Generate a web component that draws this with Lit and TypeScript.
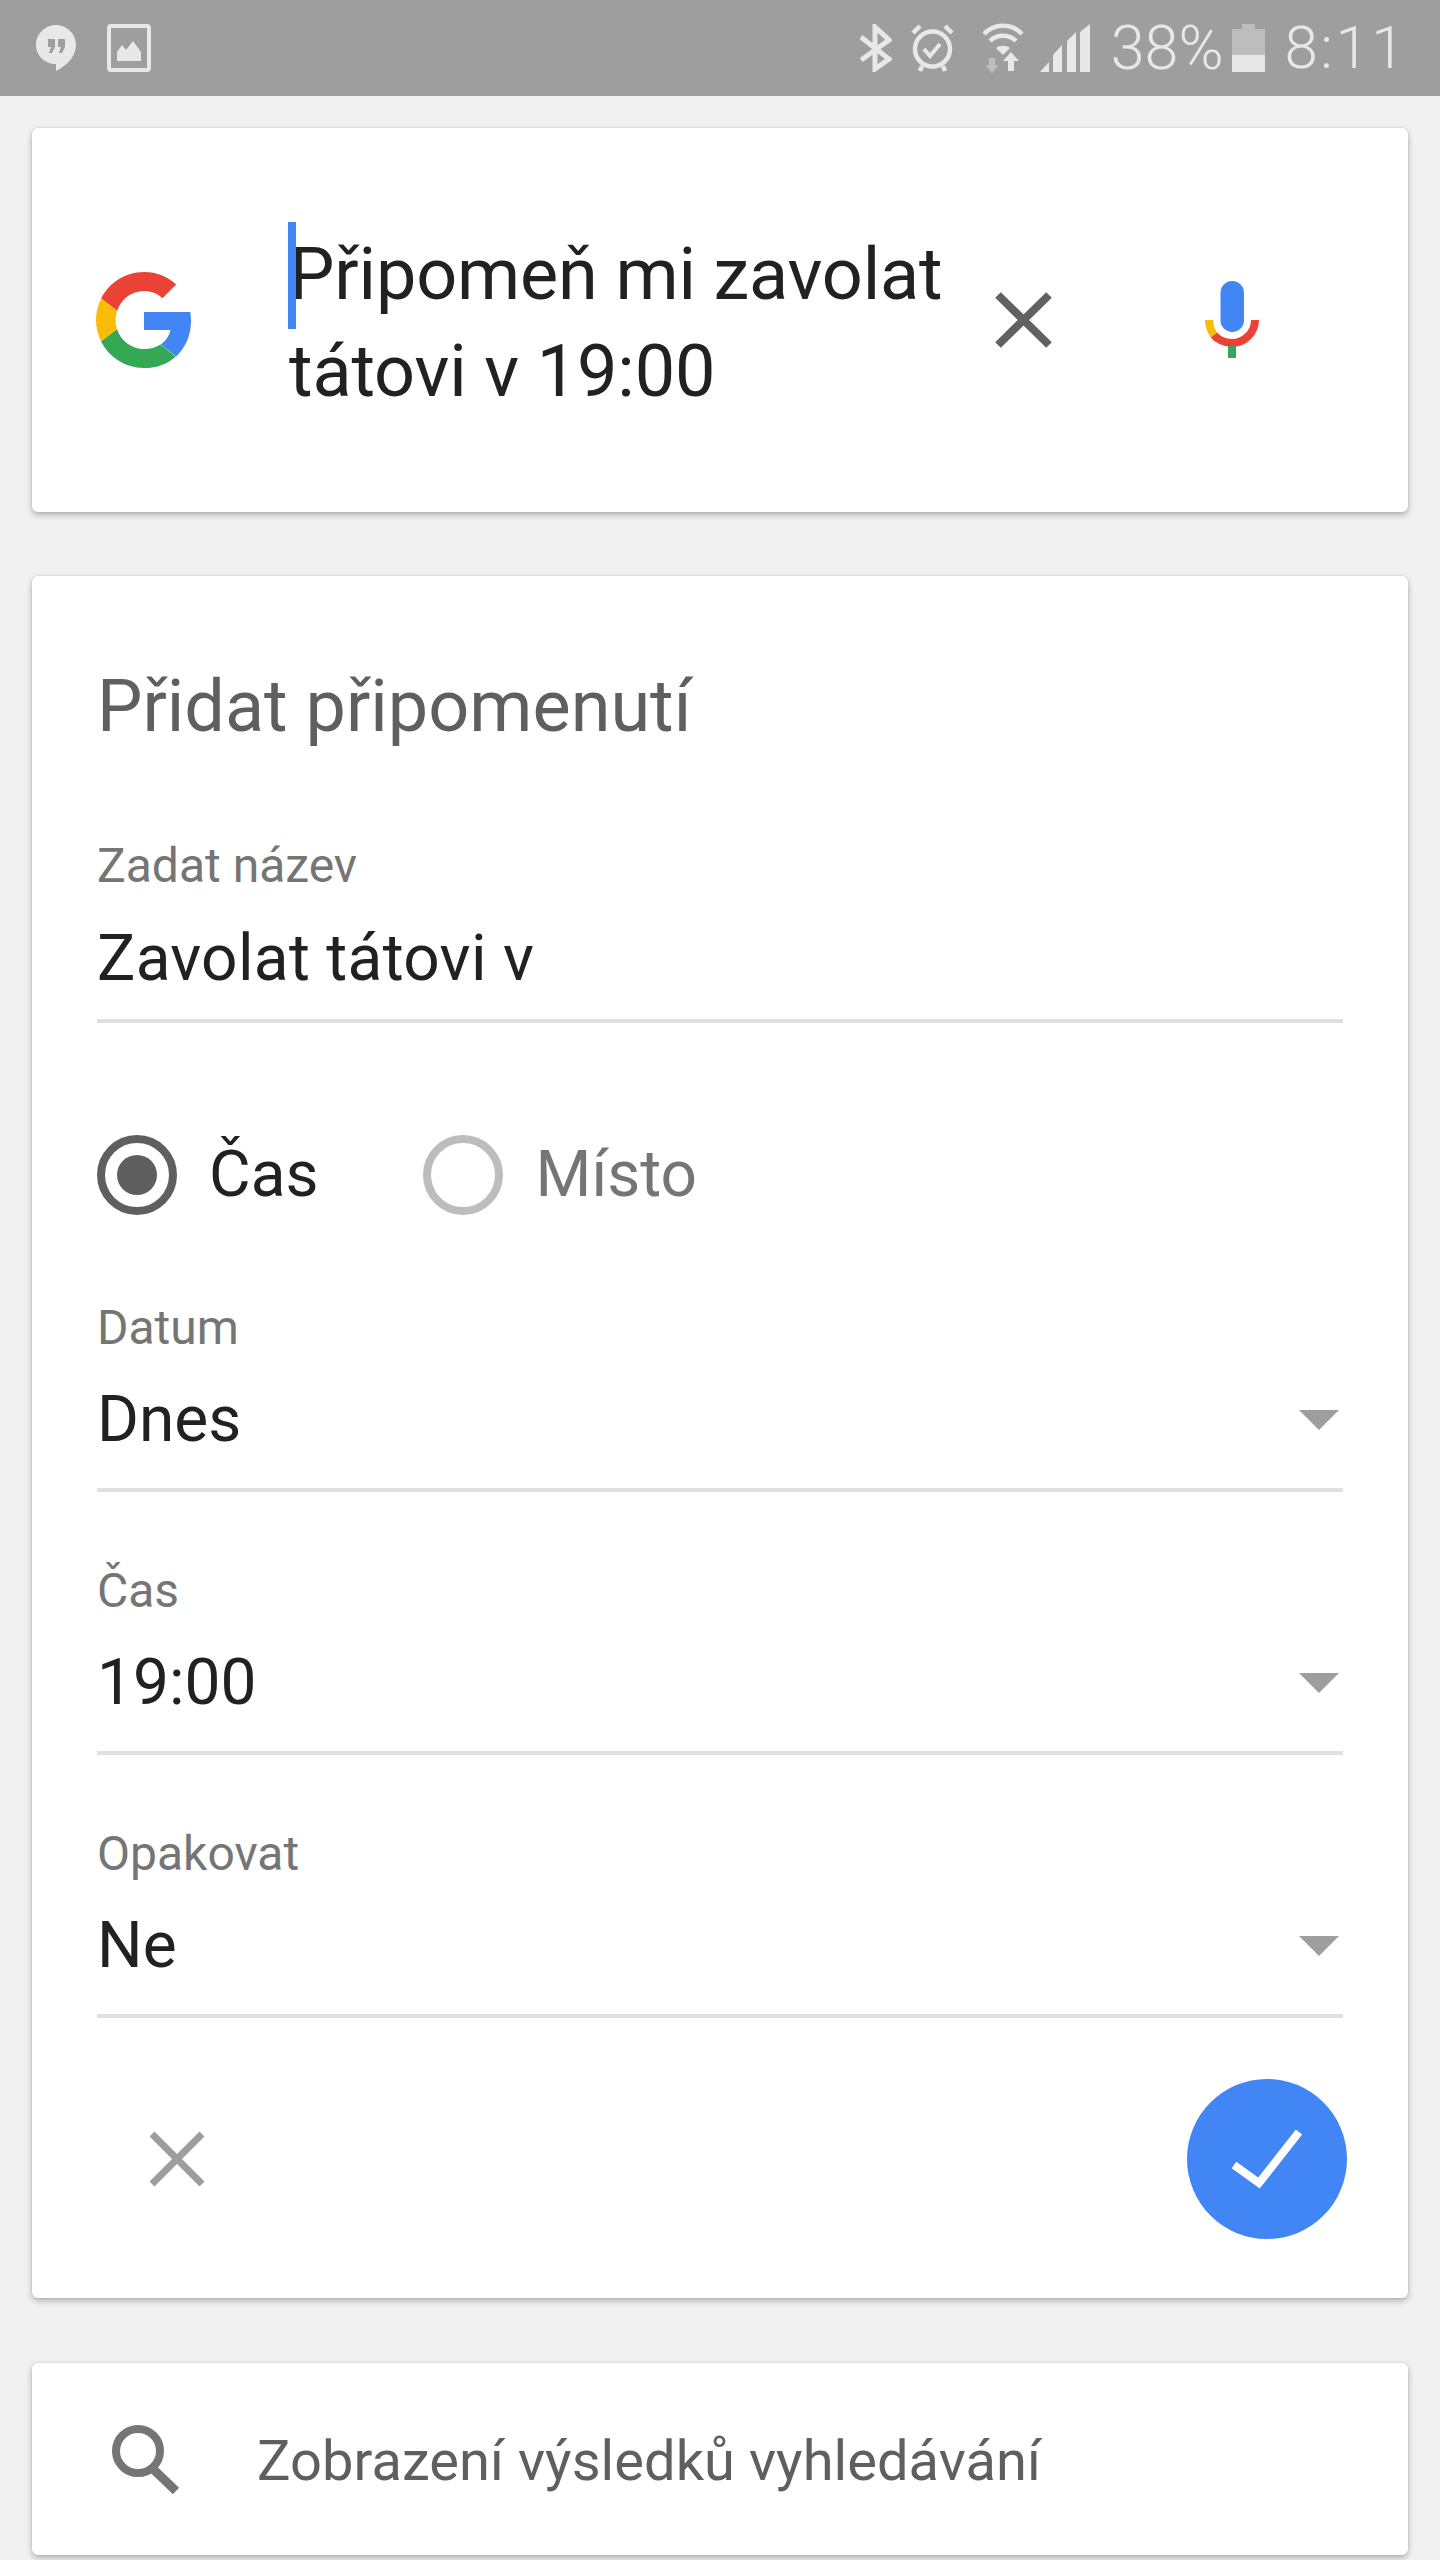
import { LitElement, html, css } from "lit";
import { customElement } from "lit/decorators.js";

const chevron = html`<svg class="arrow" viewBox="0 0 40 20"><path d="M0 0H40L20 20Z" fill="#9e9e9e"/></svg>`;

@customElement("app-root")
export class AppRoot extends LitElement {
  static styles = css`
    :host { display: block; width: 1440px; height: 2560px; overflow: hidden; background: #f1f1f1; font-family: Roboto, "Noto Sans", sans-serif; color: #212121; }
    * { box-sizing: border-box; }
    svg { display: block; flex: none; }
    .status { height: 96px; background: #9e9e9e; display: flex; align-items: flex-start; padding: 24px 33px 0 36px; color: #e8e8e8; }
    .status .spacer { flex: 1; }
    .status .txt { font-size: 61px; line-height: 48px; font-weight: 300; height: 48px; display: block; }
    .status .clock { letter-spacing: 2.5px; font-size: 60px; }
    .hang { margin-right: 31px; }
    .bt { margin-right: 19px; }
    .alarm { margin-right: 28px; }
    .wifi { margin-right: 16px; }
    .sig { margin-right: 21px; }
    .pct { margin-right: 8px; }
    .batt { margin-right: 20px; }
    .cards { display: flex; flex-direction: column; gap: 64px; padding: 32px 32px 0; }
    .card { background: #fff; border-radius: 6px; box-shadow: 0 3px 6px rgba(0,0,0,.26), 0 0 3px rgba(0,0,0,.1); }
    .search { height: 384px; display: flex; align-items: center; padding-left: 64px; }
    .g { margin-right: 97px; }
    .query { width: 690px; font-size: 72px; line-height: 97px; letter-spacing: -0.15px; position: relative; color: #212121; white-space: nowrap; margin-top: 6px; }
    .caret { position: absolute; left: -1px; top: -4px; width: 8px; height: 107px; background: #4285f4; }
    .clear { margin-left: 16px; }
    .mic { margin-left: 153px; }
    .form { height: 1722px; padding: 83px 65px 0 65px; display: flex; flex-direction: column; }
    .title { font-size: 72px; line-height: 96px; color: #5f5f5f; height: 96px; }
    .field { border-bottom: 4px solid #e0e0e0; }
    .lab { font-size: 48px; line-height: 64px; color: #757575; height: 64px; }
    .val { font-size: 64px; line-height: 80px; color: #212121; height: 80px; margin-top: 20px; display: flex; justify-content: space-between; align-items: center; padding-right: 4px; }
    .f1 { margin-top: 79px; padding-bottom: 20px; }
    .f1 .val { margin-top: 21px; letter-spacing: 0.3px; }
    .f2 { margin-top: 81px; padding-bottom: 28px; }
    .f3, .f4 { margin-top: 67px; padding-bottom: 28px; }
    .arrow { width: 40px; height: 20px; }
    .radios { display: flex; align-items: center; height: 80px; margin-top: 112px; font-size: 64px; }
    .radio { width: 80px; height: 80px; border-radius: 50%; border: 8px solid #5f5f5f; display: flex; align-items: center; justify-content: center; flex: none; }
    .radio i { width: 40px; height: 40px; border-radius: 50%; background: #5f5f5f; display: block; }
    .radio.off { border-color: #bdbdbd; margin-left: 104px; }
    .rl { margin-left: 32px; line-height: 80px; }
    .rl.off { color: #757575; margin-left: 33px; }
    .actions { display: flex; justify-content: space-between; align-items: center; margin-top: 61px; margin-right: -4px; height: 160px; padding-left: 52px; }
    .fab { width: 160px; height: 160px; border-radius: 50%; background: #4285f4; display: flex; align-items: center; justify-content: center; }
    .results { height: 192px; margin-top: 1px; display: flex; align-items: center; padding-left: 80px; font-size: 56px; color: #5f5f5f; }
    .results svg { margin-right: 77px; }
    .results span { padding-top: 4px; letter-spacing: 0.05px; }
  `;

  render() {
    return html`
      <div class="status">
        <svg class="hang" width="40" height="48" viewBox="0 0 40 48">
          <path fill="#e8e8e8" d="M20 1C9 1 0 10 0 21s9 19 20 19v7c10-5 20-14 20-26C40 10 31 1 20 1Z"/>
          <path fill="#9e9e9e" d="M12 15h7v8l-3 6h-3l2-6h-3ZM22 15h7v8l-3 6h-3l2-6h-3Z"/>
        </svg>
        <svg width="44" height="48" viewBox="0 0 44 48">
          <rect x="2" y="2" width="40" height="44" rx="2" fill="none" stroke="#e8e8e8" stroke-width="4"/>
          <path fill="#e8e8e8" d="M10 37V28l5-7 4 5 7-9 8 11v9Z"/>
        </svg>
        <span class="spacer"></span>
        <svg class="bt" width="32" height="48" viewBox="0 0 32 48" fill="none" stroke="#e8e8e8" stroke-width="5">
          <path d="M1 13 29 35 15 45V3l14 13L1 36"/>
        </svg>
        <svg class="alarm" width="43" height="48" viewBox="0 0 43 48" fill="none" stroke="#e8e8e8">
          <circle cx="21.5" cy="25" r="17.5" stroke-width="4.5"/>
          <path stroke-width="4" d="M13 25l6 7 10-12"/>
          <path stroke-width="4.5" d="M2 9l7-7M41 9l-7-7M9 47l2-5M34 47l-2-5"/>
        </svg>
        <svg class="wifi" width="42" height="50" viewBox="0 0 42 50" style="margin-top:-1px">
          <g fill="none" stroke="#e8e8e8" stroke-width="4.5"><path d="M2 11C12 0 30 0 40 11"/><path d="M8 18c7-7 19-7 26 0"/></g>
          <path fill="#e8e8e8" d="M14 25c4-3 10-3 14 0l-7 7Z"/>
          <path fill="#bdbdbd" d="M7 35h6v7h4l-7 8-7-8h4Z"/>
          <path fill="#e8e8e8" d="M22 39h5v10h6V39h5l-8-9Z" transform="translate(-1 -1)"/>
        </svg>
        <svg class="sig" width="50" height="48" viewBox="0 0 50 48" fill="#e8e8e8">
          <path d="M0 48 9 38v10ZM13 48V31l9-10v27ZM27 48V17l9-9v40ZM40 48V8l10-8v48Z"/>
        </svg>
        <span class="txt pct">38%</span>
        <svg class="batt" width="33" height="48" viewBox="0 0 33 48">
          <path fill="#bdbdbd" d="M10 0h13v5h10v26H0V5h10Z"/>
          <path fill="#e8e8e8" d="M0 31h33v17H0Z"/>
        </svg>
        <span class="txt clock">8:11</span>
      </div>
      <div class="cards">
        <div class="card search">
          <svg class="g" width="96" height="96" viewBox="0 0 48 48">
            <path fill="#ea4335" d="M24 9.5c3.500 0 6.700 1.200 9.200 3.600l6.900-6.900C35.900 2.400 30.500 0 24 0 14.600 0 6.500 5.400 2.600 13.200l8 6.200C12.400 13.700 17.700 9.500 24 9.500Z"/>
            <path fill="#4285f4" d="M47.500 24.500c0-1.600-.2-3.200-.4-4.500H24v9h13.200c-.6 3-2.300 5.500-4.800 7.200l7.700 6C44.600 37.900 47.500 31.800 47.500 24.500Z"/>
            <path fill="#fbbc05" d="M10.500 28.600C10.100 27.200 9.800 25.600 9.800 24s.3-3.200.8-4.600l-8-6.200C1 16.400 0 20.100 0 24s1 7.600 2.600 10.800Z"/>
            <path fill="#34a853" d="M24 48c6.500 0 11.900-2.100 15.900-5.800l-7.700-6c-2.200 1.500-4.900 2.300-8.200 2.300-6.300 0-11.600-4.200-13.500-9.900l-8 6.200C6.500 42.600 14.600 48 24 48Z"/>
          </svg>
          <div class="query"><span class="caret"></span>Připomeň mi zavolat<br>tátovi v 19:00</div>
          <svg class="clear" width="57" height="56" viewBox="0 0 57 56"><path d="M3 3 54 53M54 3 3 53" stroke="#616161" stroke-width="8" fill="none"/></svg>
          <svg class="mic" width="54" height="78" viewBox="0 0 54 78">
            <rect x="15.500" y="0" width="23.500" height="51" rx="11.750" fill="#4285f4"/>
            <path d="M4 39C4 46 6 50 9 54" fill="none" stroke="#fbbc05" stroke-width="8"/>
            <path d="M50 39C50 52 39 62 27 62 19 62 12 58 9 54" fill="none" stroke="#ea4335" stroke-width="8"/>
            <rect x="23" y="65" width="8" height="12" fill="#34a853"/>
          </svg>
        </div>
        <div class="card form">
          <div class="title">Přidat připomenutí</div>
          <div class="field f1">
            <div class="lab">Zadat název</div>
            <div class="val">Zavolat tátovi v</div>
          </div>
          <div class="radios">
            <span class="radio"><i></i></span><span class="rl">Čas</span>
            <span class="radio off"></span><span class="rl off">Místo</span>
          </div>
          <div class="field f2">
            <div class="lab">Datum</div>
            <div class="val">Dnes ${chevron}</div>
          </div>
          <div class="field f3">
            <div class="lab">Čas</div>
            <div class="val">19:00 ${chevron}</div>
          </div>
          <div class="field f4">
            <div class="lab">Opakovat</div>
            <div class="val">Ne ${chevron}</div>
          </div>
          <div class="actions">
            <svg width="56" height="56" viewBox="0 0 56 56"><path d="M3 3 53 53M53 3 3 53" stroke="#9e9e9e" stroke-width="7" fill="none"/></svg>
            <div class="fab">
              <svg width="72" height="64" viewBox="0 0 72 64"><path d="M3 38 28 56 68 5" stroke="#fff" stroke-width="8" fill="none"/></svg>
            </div>
          </div>
        </div>
        <div class="card results">
          <svg width="68" height="69" viewBox="0 0 68 69" fill="none" stroke="#757575">
            <circle cx="26" cy="26" r="22" stroke-width="8"/>
            <path d="M39 42 64 66" stroke-width="9"/>
          </svg>
          <span>Zobrazení výsledků vyhledávání</span>
        </div>
      </div>
    `;
  }
}
